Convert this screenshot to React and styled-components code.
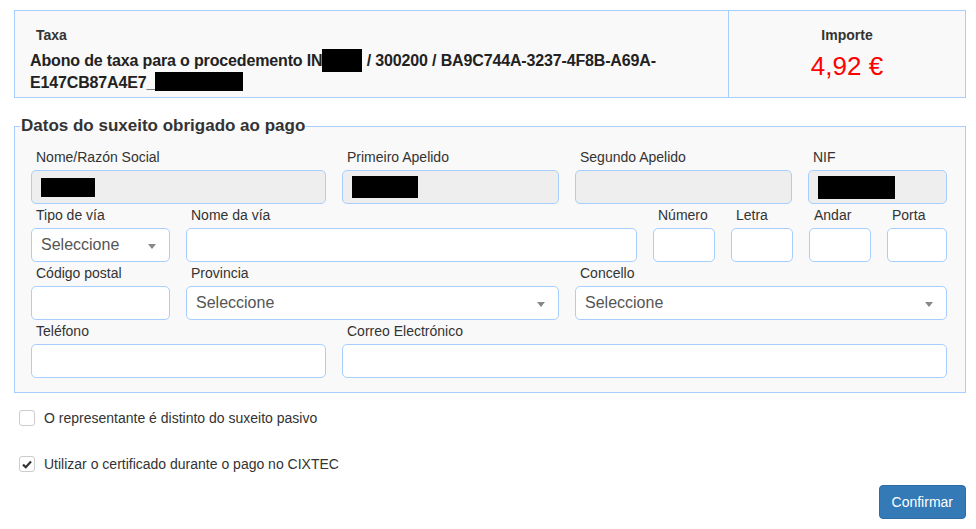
import React from "react";
import styled, { createGlobalStyle } from "styled-components";

const GlobalStyle = createGlobalStyle`
    body {
        margin: 0;
        background: #fff;
        font-family: "Liberation Sans", Arial, sans-serif;
        color: #333;
    }
`;

const Page = styled.div`
    padding: 10px 10px 0 14px;
`;

// CABECERA DA TAXA E IMPORTE
const Header = styled.div`
    display: grid;
    grid-template-columns: 713px 1fr;
    height: 88px;
    box-sizing: border-box;
    border: 1px solid #a6cfff;
    background: #f9f9f9;
    overflow: hidden;
`;

const HeaderCell = styled.div`
    padding: ${(props) => (props.center ? "15px 10px 0" : "15px 15px 0")};
    text-align: ${(props) => (props.center ? "center" : "start")};
    border-left: ${(props) => (props.center ? "1px solid #a6cfff" : "none")};
`;

const SmallTitle = styled.div`
    font-size: 14px;
    font-weight: bold;
    line-height: 18px;
    padding-left: ${(props) => (props.indent ? "6px" : "0")};
`;

const Concept = styled.div`
    margin-top: 5px;
    font-size: 16px;
    font-weight: bold;
    line-height: 21px;
    letter-spacing: -0.15px;
    color: #222;
`;

const Amount = styled.div`
    margin-top: 7px;
    font-size: 26px;
    line-height: 30px;
    color: #ff0000;
`;

const Hidden = styled.span`
    display: inline-block;
    background: #000;
    width: ${(props) => props.w}px;
    height: ${(props) => props.h}px;
    vertical-align: ${(props) => props.v || "-4px"};
`;

// DATOS DO SUXEITO
const Fieldset = styled.fieldset`
    margin: 18px 0 0 0;
    padding: 0 18px 14px 16px;
    border: 1px solid #a6cfff;
    background: #f9f9f9;
`;

const Legend = styled.legend`
    margin-left: -11px;
    padding: 0 1px;
    font-size: 17px;
    font-weight: bold;
    line-height: 20px;
    color: #333;
`;

const Rows = styled.div`
    padding-top: 11px;
    display: flex;
    flex-direction: column;
    gap: 1px;
`;

const Row = styled.div`
    display: grid;
    grid-template-columns: ${(props) => props.cols};
    column-gap: 16px;
`;

const Field = styled.div`
    display: flex;
    flex-direction: column;
    gap: 3px;
`;

const Label = styled.label`
    font-size: 14px;
    line-height: 20px;
    padding-left: 5px;
    color: #333;
    white-space: nowrap;
`;

const Input = styled.div`
    height: 34px;
    box-sizing: border-box;
    border: 1px solid #a6cfff;
    border-radius: 5px;
    background: ${(props) => (props.disabled ? "#eeeeee" : "#fff")};
    display: flex;
    align-items: center;
    padding: 0 13px 0 9px;
    font-size: 16px;
    color: #555;
`;

const SelectText = styled.span`
    flex: 1;
`;

const Arrow = styled.span`
    width: 0;
    height: 0;
    margin-top: 3px;
    border-left: 4px solid transparent;
    border-right: 4px solid transparent;
    border-top: 5px solid #888;
`;

// CHECKBOXES E BOTÓN
const Options = styled.div`
    padding: 17px 0 0 5px;
    display: flex;
    flex-direction: column;
    gap: 30px;
`;

const CheckRow = styled.label`
    display: flex;
    align-items: center;
    gap: 9px;
    font-size: 14px;
    line-height: 16px;
    color: #333;
`;

const Box = styled.span`
    width: 16px;
    height: 16px;
    box-sizing: border-box;
    border: 1px solid #ccc;
    border-radius: 3px;
    background: #fff;
    display: flex;
    align-items: center;
    justify-content: center;
`;

const Actions = styled.div`
    display: flex;
    justify-content: flex-end;
    margin-top: 13px;
`;

const Button = styled.button`
    height: 34px;
    padding: 0 12px;
    border: 1px solid #2e6da4;
    border-radius: 4px;
    background: #337ab7;
    color: #fff;
    font-family: "Liberation Sans", Arial, sans-serif;
    font-size: 14px;
`;

const Select = ({ label }) => (
    <Field>
        <Label>{label}</Label>
        <Input>
            <SelectText>Seleccione</SelectText>
            <Arrow />
        </Input>
    </Field>
);

const Text = ({ label, disabled, hidden }) => (
    <Field>
        <Label>{label}</Label>
        <Input disabled={disabled}>
            {hidden && <Hidden w={hidden[0]} h={hidden[1]} />}
        </Input>
    </Field>
);

const Check = ({ checked, children }) => (
    <CheckRow>
        <Box>
            {checked && (
                <svg width="10" height="9" viewBox="0 0 10 9">
                    <path d="M1 4.6 L3.8 7.2 L9 1.6" fill="none" stroke="#333" strokeWidth="2.2" />
                </svg>
            )}
        </Box>
        {children}
    </CheckRow>
);

const App = () => {
    return (
        <Page>
            <GlobalStyle />
            <Header>
                <HeaderCell>
                    <SmallTitle indent>Taxa</SmallTitle>
                    <Concept>
                        Abono de taxa para o procedemento IN<Hidden w={40} h={23} v="-6px" /> / 300200 / BA9C744A-3237-4F8B-A69A-
                        <br />
                        E147CB87A4E7_<Hidden w={88} h={19} v="-3px" />
                    </Concept>
                </HeaderCell>
                <HeaderCell center>
                    <SmallTitle>Importe</SmallTitle>
                    <Amount>4,92 €</Amount>
                </HeaderCell>
            </Header>

            <Fieldset>
                <Legend>Datos do suxeito obrigado ao pago</Legend>
                <Rows>
                    <Row cols="295px 217px 217px 1fr">
                        <Text label="Nome/Razón Social" disabled hidden={[54, 19]} />
                        <Text label="Primeiro Apelido" disabled hidden={[66, 22]} />
                        <Text label="Segundo Apelido" disabled />
                        <Text label="NIF" disabled hidden={[77, 23]} />
                    </Row>
                    <Row cols="139px 451px 62px 62px 62px 1fr">
                        <Select label="Tipo de vía" />
                        <Text label="Nome da vía" />
                        <Text label="Número" />
                        <Text label="Letra" />
                        <Text label="Andar" />
                        <Text label="Porta" />
                    </Row>
                    <Row cols="139px 373px 1fr">
                        <Text label="Código postal" />
                        <Select label="Provincia" />
                        <Select label="Concello" />
                    </Row>
                    <Row cols="295px 1fr">
                        <Text label="Teléfono" />
                        <Text label="Correo Electrónico" />
                    </Row>
                </Rows>
            </Fieldset>

            <Options>
                <Check>O representante é distinto do suxeito pasivo</Check>
                <Check checked>Utilizar o certificado durante o pago no CIXTEC</Check>
            </Options>

            <Actions>
                <Button>Confirmar</Button>
            </Actions>
        </Page>
    );
};

export default App;
